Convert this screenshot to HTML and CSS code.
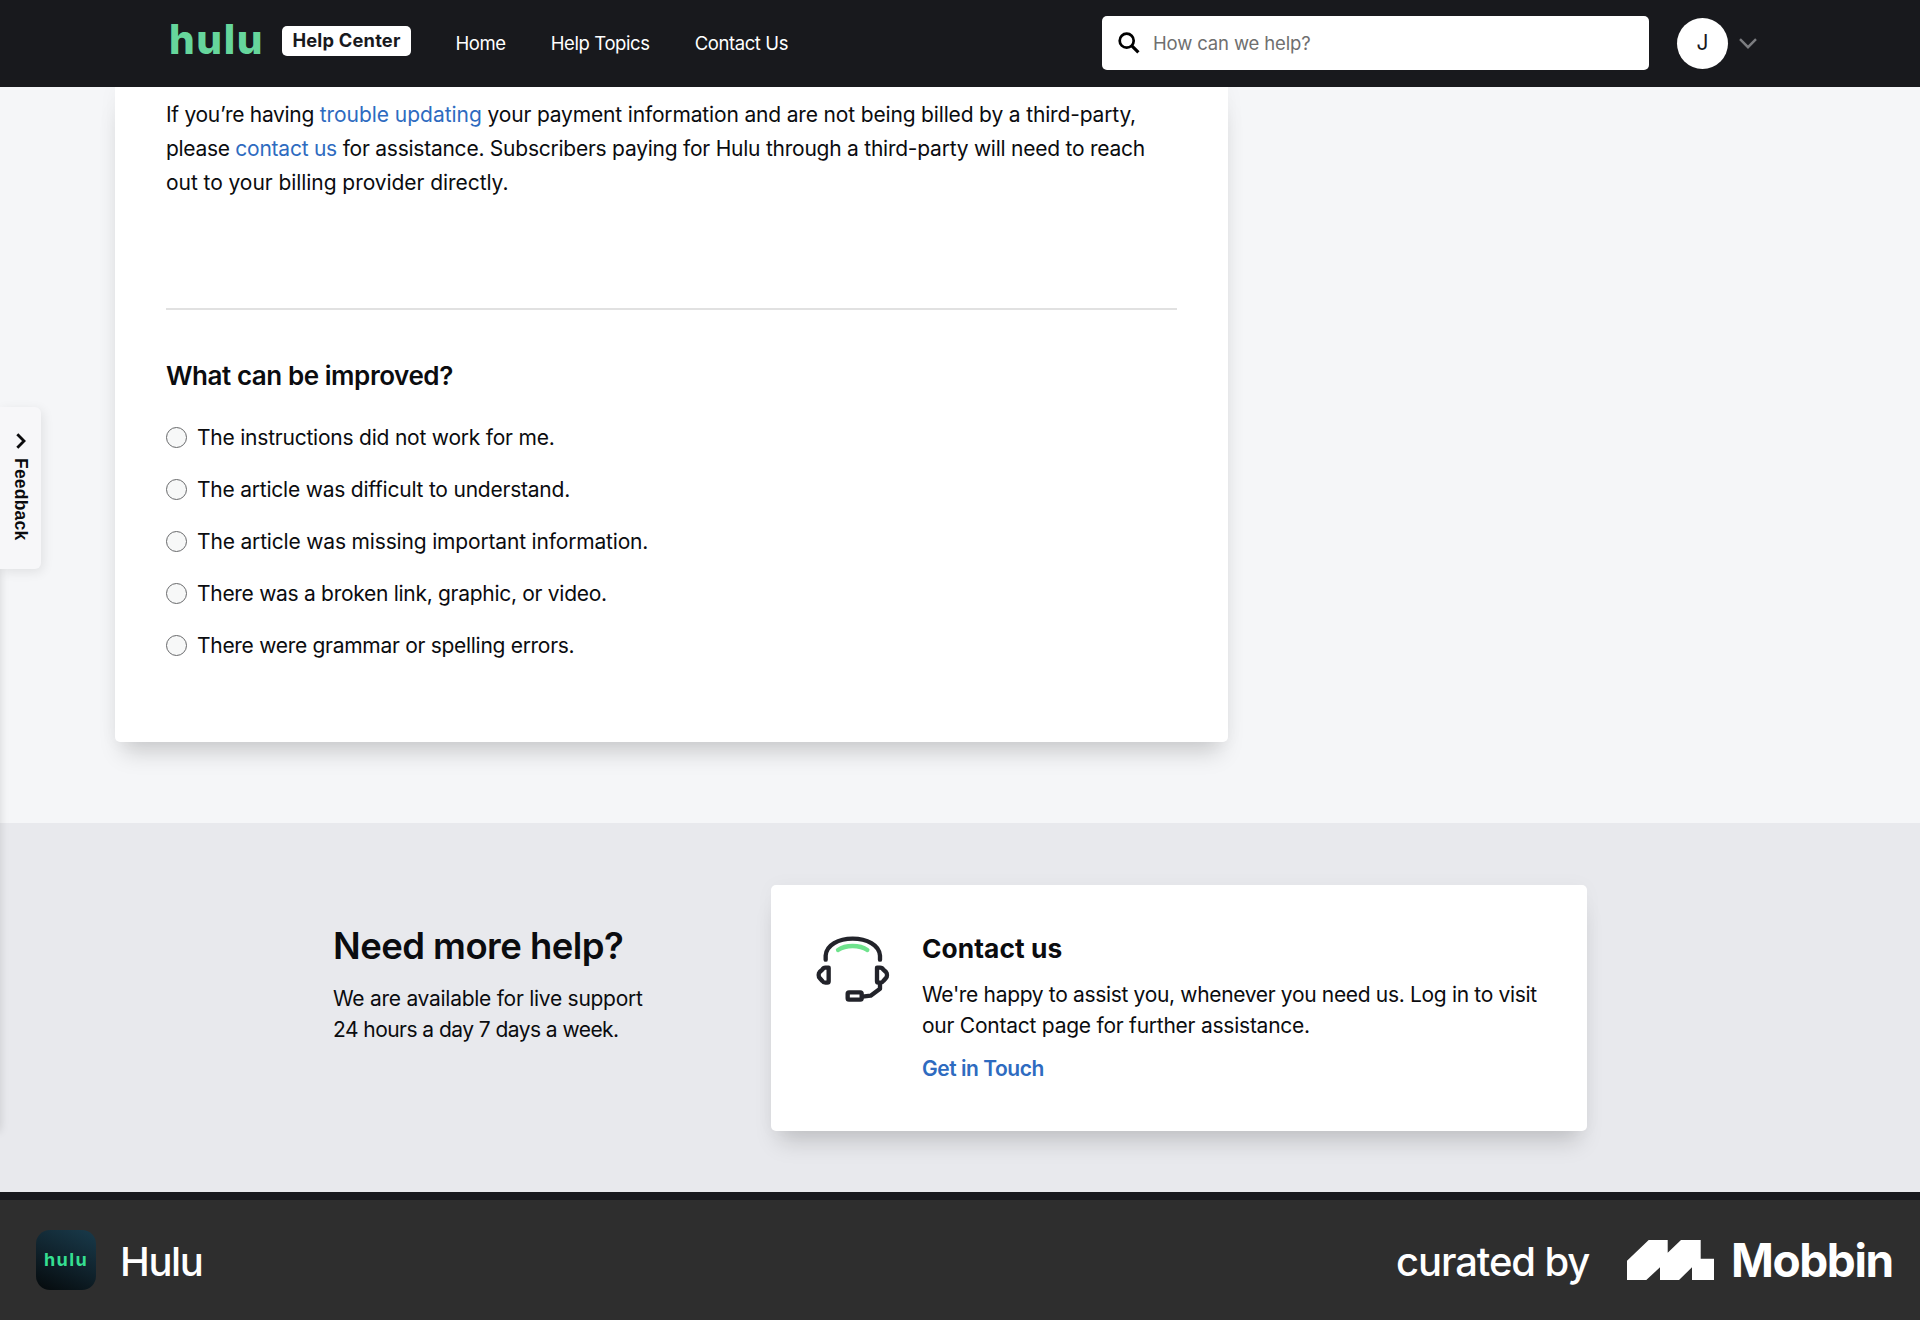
FILE: index.html
```html
<!DOCTYPE html>
<html lang="en">
<head>
<meta charset="utf-8">
<title>Hulu Help Center</title>
<link rel="stylesheet" href="styles.css">
</head>
<body>
<div class="page">
  <header class="header">
    <a class="wordmark">hulu</a>
    <span class="badge">Help Center</span>
    <nav class="nav">
      <a>Home</a>
      <a>Help Topics</a>
      <a>Contact Us</a>
    </nav>
    <div class="search">
      <svg class="search-icon" width="22" height="22" viewBox="0 0 22 22" fill="none" stroke="#000"><circle cx="8.7" cy="8.7" r="7" stroke-width="2.7"/><path d="M13.6 13.6 20.4 20.4" stroke-width="3.2"/></svg>
      <span class="placeholder">How can we help?</span>
    </div>
    <div class="avatar">J</div>
    <svg class="caret" width="18" height="11" viewBox="0 0 18 11" fill="none" stroke="#7c7d80" stroke-width="2.4"><path d="M1 1.2 9 9.2 17 1.2"/></svg>
  </header>

  <main class="main">
    <article class="article">
      <p class="para">
        <span class="line line-a"><span class="lead">If you’re having </span><a>trouble updating</a> your payment information and are not being billed by a third-party,</span>
        <span class="line line-b"><span class="lead">please </span><a>contact us</a> for assistance. Subscribers paying for Hulu through a third-party will need to reach</span>
        <span class="line line-c">out to your billing provider directly.</span>
      </p>
      <hr class="rule">
      <h2 class="improve">What can be improved?</h2>
      <ul class="options">
        <li><i class="radio"></i><span>The instructions did not work for me.</span></li>
        <li><i class="radio"></i><span>The article was difficult to understand.</span></li>
        <li><i class="radio"></i><span class="looser">The article was missing important information.</span></li>
        <li><i class="radio"></i><span class="tighter">There was a broken link, graphic, or video.</span></li>
        <li><i class="radio"></i><span class="tighter">There were grammar or spelling errors.</span></li>
      </ul>
    </article>
  </main>

  <section class="help">
    <div class="more">
      <h1>Need more help?</h1>
      <p>We are available for live support<br><span class="hours">24 hours a day 7 days a week.</span></p>
    </div>
    <div class="contact">
      <svg class="headset" width="74" height="67" viewBox="48 49 222 201" fill="none" stroke="#22232a" stroke-width="13" stroke-linecap="round" stroke-linejoin="round">
        <path d="M77 120V108C79 76 116 57 158 57S238 76 240 108V120"/>
        <path d="M114 91C137 75 179 75 202 91" stroke="#6fe38d"/>
        <path d="M86 144H76Q70 144 67 150L59 157Q56 160 56 166T59 175L67 184Q70 189 76 189H82Q86 189 86 185Z"/>
        <path d="M231 144H240Q247 144 250 150L258 157Q261 160 261 166T258 175L250 184Q247 189 241 189H235Q231 189 231 185Z"/>
        <path d="M240 192V207L212 228L187 231"/>
        <rect x="143" y="218" width="42" height="22" rx="4"/>
      </svg>
      <div class="contact-body">
        <h3>Contact us</h3>
        <p>We're happy to assist you, whenever you need us. Log in to visit<br><span class="further">our Contact page for further assistance.</span></p>
        <a>Get in Touch</a>
      </div>
    </div>
  </section>

  <div class="site-footer"></div>

  <footer class="credit">
    <div class="app-icon">hulu</div>
    <span class="app-name">Hulu</span>
    <span class="curated">curated by</span>
    <svg class="mobbin-mark" width="87" height="40" viewBox="0 0 87 40" fill="#fff"><path d="M0 20.7 21.7 0H40.7V12.7L54 0H73.7V18.7H87V40H65V27.3L52 40H33V27.3L19.3 40H0Z"/></svg>
    <span class="mobbin">Mobbin</span>
  </footer>

  <div class="side-panel"></div>
  <div class="feedback">
    <svg width="10" height="16" viewBox="0 0 10 16" fill="none" stroke="#0b0b0d" stroke-width="2.8"><path d="M1.3 1.3 8 8 1.3 14.7"/></svg>
    <span>Feedback</span>
  </div>
</div>
</body>
</html>
```
FILE: styles.css
```css
* { box-sizing: border-box; }
body { margin: 0; font-family: Inter, "Liberation Sans", sans-serif; font-size: 21px; color: #0b0c0f; }
h1, h2, h3, p, ul { margin: 0; padding: 0; }
.page { position: relative; width: 1920px; height: 1320px; overflow: hidden; display: flex; flex-direction: column; background: #f5f6f8; }

.header { position: relative; z-index: 2; flex: none; height: 87px; padding-left: 168px; display: flex; align-items: flex-start; background: #18191d; }
.wordmark { width: 114px; margin-top: 15px; padding-left: 1px; font-size: 40.5px; line-height: 50px; font-weight: 800; letter-spacing: 1.6px; color: #66d69c; }
.badge { width: 129px; height: 30px; margin-top: 26px; border-radius: 5px; background: #fff; color: #18191d; font-size: 18.3px; line-height: 29px; font-weight: 700; letter-spacing: 0.2px; text-align: center; white-space: nowrap; }
.nav { width: 691px; margin-top: 32.5px; padding-left: 44.5px; display: flex; gap: 45px; color: #fff; font-size: 18.5px; line-height: 21px; letter-spacing: -0.4px; white-space: nowrap; }
.search { width: 547px; height: 54px; margin-top: 16px; padding-left: 16px; display: flex; align-items: center; gap: 13px; background: #fff; border-radius: 5px; }
.placeholder { font-size: 18.5px; letter-spacing: -0.15px; color: #6f6f6f; }
.avatar { width: 51px; height: 51px; margin: 18px 0 0 28px; border-radius: 50%; background: #fff; color: #18191d; text-align: center; line-height: 50px; font-size: 21px; }
.caret { margin: 38px 0 0 11px; }

.main { flex: none; height: 736px; padding-left: 115px; }
.article { width: 1113px; height: 655px; padding: 11px 51px 0; background: #fff; border-radius: 0 0 5px 5px; box-shadow: 0 18px 22px -8px rgba(0, 0, 0, .17), 0 0 20px rgba(0, 0, 0, .04); }
.para { height: 210px; line-height: 33.8px; white-space: nowrap; }
.line { display: block; }
.line-a { letter-spacing: -0.16px; }
.line-b { letter-spacing: -0.24px; }
.line-c { letter-spacing: -0.06px; }
.line .lead { letter-spacing: -0.3px; }
.line-a a { letter-spacing: -0.04px; }
.para a, .contact a { color: #2e6bc0; }
.rule { height: 2px; margin: 0 0 50px; border: 0; background: #e1e1e1; }
.improve { font-size: 26px; line-height: 32px; font-weight: 600; letter-spacing: -0.44px; }
.options { margin-top: 20px; list-style: none; letter-spacing: -0.22px; }
.options li { height: 51.9px; display: flex; align-items: center; gap: 10px; }
.radio { width: 21px; height: 21px; border: 1.5px solid #68696b; border-radius: 50%; background: #f7f8f8; }
.looser { letter-spacing: -0.17px; }
.tighter { letter-spacing: -0.29px; }

.help { flex: none; height: 369px; padding: 62px 0 0 333px; display: flex; background: #e8e9ed; }
.more { width: 438px; padding-top: 39px; }
.more h1 { font-size: 36.5px; line-height: 44px; font-weight: 600; letter-spacing: -0.55px; }
.more p { margin-top: 16px; line-height: 30.6px; letter-spacing: -0.27px; }
.more .hours { letter-spacing: -0.55px; }
.contact { width: 816px; height: 246px; padding: 51px 0 0 45px; display: flex; align-items: flex-start; background: #fff; border-radius: 5px; box-shadow: 0 18px 22px -8px rgba(0, 0, 0, .17), 0 0 20px rgba(0, 0, 0, .03); }
.contact-body { margin: -3px 0 0 32px; white-space: nowrap; }
.contact h3 { font-size: 26.3px; line-height: 32px; font-weight: 700; letter-spacing: 0.1px; }
.contact p { margin-top: 15px; line-height: 30.6px; letter-spacing: -0.33px; }
.contact .further { letter-spacing: -0.24px; }
.contact-body a { display: block; margin-top: 12px; line-height: 31px; font-weight: 600; letter-spacing: -0.46px; }

.site-footer { flex: none; height: 8px; background: #18191d; }
.credit { flex: none; height: 120px; padding-left: 36px; display: flex; align-items: flex-start; background: #2e2e2e; color: #fff; white-space: nowrap; }
.app-icon { width: 60px; height: 60px; margin-top: 30px; border-radius: 14px; background: linear-gradient(205deg, #183848 5%, #10232d 50%, #060c0f 95%); color: #35df91; font-size: 18px; line-height: 60px; font-weight: 700; letter-spacing: 1.4px; text-align: center; }
.app-name { width: 1276px; margin: 37px 0 0 24px; font-size: 40px; line-height: 50px; font-weight: 500; letter-spacing: -1.4px; }
.curated { width: 231px; margin-top: 37px; font-size: 40px; line-height: 50px; font-weight: 500; letter-spacing: -1.1px; }
.mobbin-mark { margin: 40px 17px 0 0; flex: none; }
.mobbin { margin-top: 35px; font-size: 46px; line-height: 50px; font-weight: 700; letter-spacing: -1.4px; }

.side-panel { position: absolute; left: -20px; top: 420px; width: 20px; height: 711px; box-shadow: 0 0 10px rgba(0, 0, 0, .14); }
.feedback { position: absolute; left: 0; top: 407px; width: 41px; height: 162px; padding-top: 26px; display: flex; flex-direction: column; align-items: center; gap: 9px; background: #f7f7f9; border-radius: 0 6px 6px 0; box-shadow: 2px 3px 12px rgba(0, 0, 0, .09); }
.feedback span { writing-mode: vertical-rl; font: 700 17.5px/20px "Liberation Sans", Arial, sans-serif; letter-spacing: 0.2px; }
```
